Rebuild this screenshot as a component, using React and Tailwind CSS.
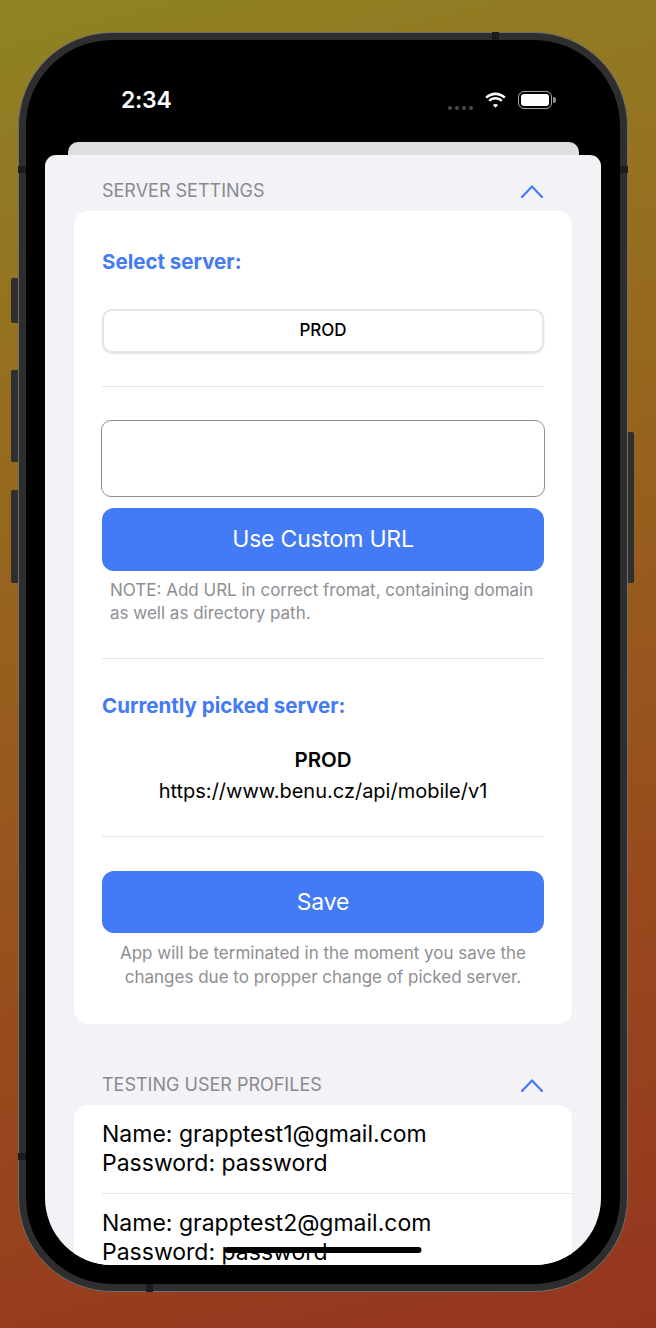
import React from "react";

function Chevron() {
  return (
    <svg width="22" height="13" viewBox="0 0 22 13" fill="none">
      <polyline points="1,12 11,1.5 21,12" stroke="#437af6" strokeWidth="2.2" strokeLinecap="round" strokeLinejoin="round" />
    </svg>
  );
}

function Wifi() {
  return (
    <svg width="23" height="16" viewBox="0 0 23 16">
      <path d="M11.5 3.2c3.3 0 6.3 1.3 8.5 3.4l1.7-1.8C19 2.2 15.4 0.6 11.5 0.6S4 2.2 1.3 4.8L3 6.6c2.2-2.1 5.2-3.4 8.5-3.4z" fill="#fff" />
      <path d="M11.5 7.6c2.1 0 4 0.8 5.4 2.1l1.7-1.8c-1.9-1.7-4.4-2.8-7.1-2.8S6.3 6.2 4.4 7.9l1.7 1.8c1.4-1.3 3.3-2.1 5.4-2.1z" fill="#fff" />
      <path d="M11.5 11.9c1 0 1.9 0.4 2.6 1l-2.6 2.8-2.6-2.8c0.7-0.6 1.6-1 2.6-1z" fill="#fff" />
    </svg>
  );
}

function Battery() {
  return (
    <div className="flex items-center">
      <div className="w-[34px] h-[18px] rounded-[6px] border-[1.5px] border-[#a9a9a9] p-[2px]">
        <div className="w-full h-full rounded-[3px] bg-white" />
      </div>
      <div className="w-[3px] h-[6px] ml-[1px] rounded-r-[2px] bg-[#8a8a8a]" />
    </div>
  );
}

function Divider() {
  return <div className="h-px bg-[#e6e6ea]" />;
}

function SectionHeader({ title }) {
  return (
    <div className="flex items-center justify-between pl-[57px] pr-[58px] h-[22px]">
      <span className="text-[18px] leading-[22px] text-[#8a8a8e]">{title}</span>
      <Chevron />
    </div>
  );
}

function Profile({ n, last }) {
  return (
    <div className={"ml-[28px] py-[15px] " + (last ? "" : "border-b border-[#e6e6ea]")}>
      <div className="text-[23px] leading-[29px] text-black">Name: grapptest{n}@gmail.com</div>
      <div className="text-[23px] leading-[29px] text-black">Password: password</div>
    </div>
  );
}

export default function App() {
  return (
    <div className="w-[656px] h-[1328px] overflow-hidden pt-[32px] pl-[18px] font-['Inter',sans-serif] bg-[linear-gradient(165deg,#8e8324_0%,#957220_22%,#975f1e_45%,#984a1d_70%,#95351f_100%)]">
      <div className="relative w-[610px] h-[1260px]">
        {/* side buttons */}
        <div className="absolute left-[-7px] top-[246px] w-[7px] h-[45px] rounded-l-[2px] bg-[#2f2f2f]" />
        <div className="absolute left-[-7px] top-[338px] w-[7px] h-[92px] rounded-l-[2px] bg-[#2f2f2f]" />
        <div className="absolute left-[-7px] top-[458px] w-[7px] h-[93px] rounded-l-[2px] bg-[#2f2f2f]" />
        <div className="absolute right-[-6px] top-[400px] w-[6px] h-[151px] rounded-r-[2px] bg-[#2f2f2f]" />

        <div className="w-full h-full rounded-[94px] border border-[#707070] bg-[#2e2e2e] p-[7px]">
          <div className="relative w-full h-full rounded-[86px] bg-black p-[19px]">
            {/* antenna bands */}
            <div className="absolute left-[-8px] top-[126px] w-[8px] h-[7px] bg-[#1c1c1c]" />
            <div className="absolute right-[-8px] top-[126px] w-[8px] h-[7px] bg-[#1c1c1c]" />
            <div className="absolute left-[466px] top-[-8px] w-[7px] h-[8px] bg-[#1c1c1c]" />
            <div className="absolute left-[-8px] top-[1113px] w-[8px] h-[7px] bg-[#1c1c1c]" />
            <div className="absolute left-[120px] bottom-[-8px] w-[7px] h-[8px] bg-[#1c1c1c]" />

            <div className="relative w-full h-full rounded-[67px] bg-black overflow-hidden flex flex-col">
              {/* status bar */}
              <div className="h-[83px] shrink-0 flex justify-between pt-[27px] pl-[76px] pr-[45px]">
                <span className="text-white text-[23px] leading-[28px] font-semibold tracking-[-0.3px]">2:34</span>
                <div className="flex items-center h-[28px] gap-[11px]">
                  <div className="flex gap-[3px] self-end mb-[4px]">
                    <div className="w-[4px] h-[4px] rounded-full bg-[#4a4a4a]" />
                    <div className="w-[4px] h-[4px] rounded-full bg-[#4a4a4a]" />
                    <div className="w-[4px] h-[4px] rounded-full bg-[#4a4a4a]" />
                    <div className="w-[4px] h-[4px] rounded-full bg-[#4a4a4a]" />
                  </div>
                  <Wifi />
                  <Battery />
                </div>
              </div>
              {/* stacked card behind */}
              <div className="h-[13px] shrink-0 ml-[23px] mr-[22px] rounded-t-[10px] bg-[#dedee0]" />
              {/* sheet */}
              <div className="flex-1 bg-[#f2f2f7] rounded-t-[11px] pt-[25px]">
                <SectionHeader title="SERVER SETTINGS" />
                <div className="mx-[29px] mt-[9px] bg-white rounded-[14px] px-[28px] pt-[39px] pb-[35px]">
                  <div className="text-[20.5px] leading-[24px] font-bold text-[#437af6]">Select server:</div>
                  <div className="mt-[35px] h-[44px] rounded-[10px] border-2 border-[#e5e5e5] shadow-[0_1px_2px_rgba(0,0,0,0.12)] flex items-center justify-center">
                    <span className="text-[17px] font-medium text-black">PROD</span>
                  </div>
                  <div className="mt-[33px]"><Divider /></div>
                  <div className="mt-[33px] -mx-[1px] h-[77px] rounded-[10px] border-[1.5px] border-[#8f8f8f]" />
                  <div className="mt-[11px] h-[63px] rounded-[12px] bg-[#437af6] flex items-center justify-center">
                    <span className="text-white text-[23px] tracking-[-0.2px]">Use Custom URL</span>
                  </div>
                  <div className="mt-[8px] px-[8px] text-[17px] leading-[23px] text-[#8e8e93]">
                    NOTE: Add URL in correct fromat, containing domain as well as directory path.
                  </div>
                  <div className="mt-[33px]"><Divider /></div>
                  <div className="mt-[35px] text-[20.5px] leading-[24px] font-bold text-[#437af6]">Currently picked server:</div>
                  <div className="mt-[30px] text-center text-[20.5px] leading-[24px] font-semibold text-black">PROD</div>
                  <div className="mt-[7px] text-center text-[20px] leading-[24px] text-black">https://www.benu.cz/api/mobile/v1</div>
                  <div className="mt-[33px]"><Divider /></div>
                  <div className="mt-[34px] h-[62px] rounded-[12px] bg-[#437af6] flex items-center justify-center">
                    <span className="text-white text-[23px] tracking-[-0.2px]">Save</span>
                  </div>
                  <div className="mt-[8px] px-[14px] text-center text-[17px] leading-[24px] text-[#8e8e93]">
                    App will be terminated in the moment you save the changes due to propper change of picked server.
                  </div>
                </div>
                <div className="mt-[50px]">
                  <SectionHeader title="TESTING USER PROFILES" />
                </div>
                <div className="mx-[29px] mt-[9px] bg-white rounded-t-[14px]">
                  <Profile n={1} />
                  <Profile n={2} last />
                </div>
              </div>
              {/* home indicator */}
              <div className="absolute left-1/2 -translate-x-1/2 bottom-[12px] w-[197px] h-[6px] rounded-full bg-black" />
            </div>
          </div>
        </div>
      </div>
    </div>
  );
}
